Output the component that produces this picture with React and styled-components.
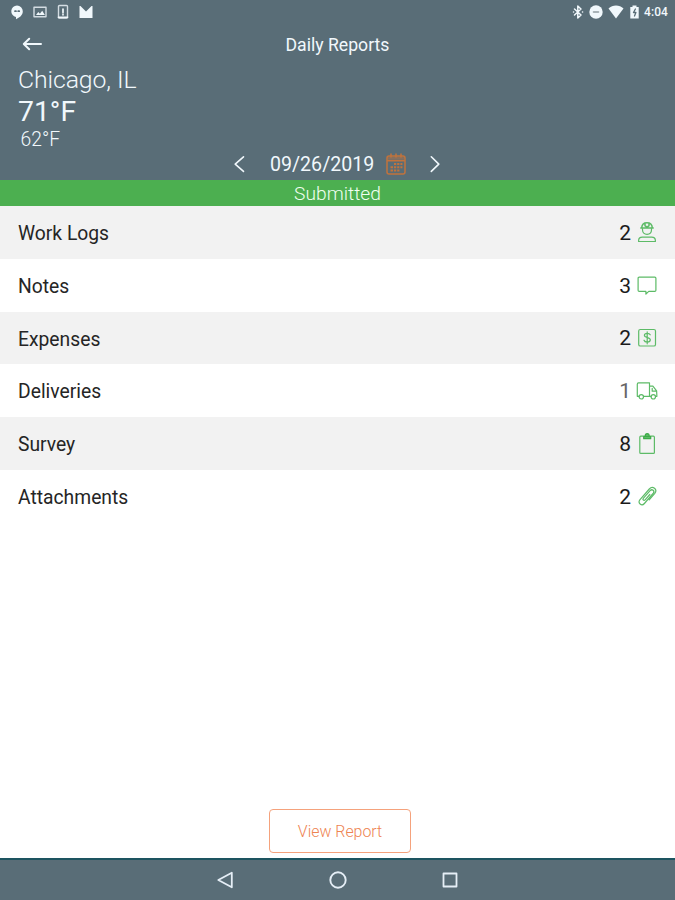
import React from "react";
import styled, { createGlobalStyle } from "styled-components";

const GlobalStyle = createGlobalStyle`
  * { box-sizing: border-box; }
  body { margin: 0; background: #fff; font-family: Roboto, sans-serif; }
`;

const Screen = styled.div`
  display: flex;
  flex-direction: column;
  width: 675px;
  height: 900px;
  background: #fff;
  overflow: hidden;
`;

const Header = styled.header`
  display: flex;
  flex-direction: column;
  height: 180px;
  background: #596d77;
  color: #f1f8fc;
`;

const StatusBar = styled.div`
  display: flex;
  justify-content: space-between;
  height: 23px;
  padding: 0 7px 0 9px;
`;

const StatusGroup = styled.div`
  display: flex;
  align-items: center;
  gap: ${(p) => p.$gap}px;
`;

const Clock = styled.span`
  font-size: 12px;
  line-height: 22px;
  padding-top: 1px;
  font-weight: 500;
  letter-spacing: 0.1px;
`;

const Toolbar = styled.div`
  display: grid;
  grid-template-columns: 60px 1fr 60px;
  align-items: center;
  height: 43px;
`;

const IconButton = styled.button`
  display: flex;
  align-items: center;
  justify-content: center;
  padding: 0;
  border: 0;
  background: none;
  color: inherit;
`;

const BackButton = styled(IconButton)`
  width: 24px;
  height: 24px;
  margin-left: 20px;
  margin-top: -1px;
`;

const Title = styled.h1`
  margin: 0;
  text-align: center;
  font-size: 17.65px;
  line-height: 22px;
  font-weight: 400;
`;

const Weather = styled.div`
  display: flex;
  flex-direction: column;
  height: 84px;
  padding-left: 18px;
`;

const City = styled.div`
  font-size: 24.8px;
  line-height: 28px;
  font-weight: 300;
  letter-spacing: -0.1px;
`;

const High = styled.div`
  padding-top: 1px;
  font-size: 28.3px;
  line-height: 34px;
  font-weight: 400;
`;

const Low = styled.div`
  padding-left: 2.5px;
  font-size: 19.3px;
  line-height: 22px;
  font-weight: 300;
`;

const DateRow = styled.div`
  display: flex;
  align-items: center;
  justify-content: center;
  height: 28px;
`;

const DateText = styled.span`
  margin-left: 21px;
  width: 116px;
  padding-top: 2px;
  font-size: 19.6px;
  line-height: 28px;
`;

const NextButton = styled(IconButton)`
  margin-left: 20px;
`;

const Banner = styled.div`
  height: 26px;
  background: #4caf50;
  color: #f0fff0;
  text-align: center;
  font-size: 19.2px;
  line-height: 28px;
  font-weight: 300;
`;

const List = styled.ul`
  margin: 0;
  padding: 0;
  list-style: none;
`;

const Row = styled.li`
  display: flex;
  align-items: center;
  height: 52.75px;
  padding: 1px 16px 0 18px;
  color: #252525;
  font-size: 19.3px;
  background: #fff;
  &:nth-child(odd) { background: #f2f2f2; }
`;

const Label = styled.span`
  flex: 1;
  padding-top: 1.5px;
`;

const Count = styled.span`
  font-size: 21px;
  margin-right: 4px;
  color: ${(p) => (p.$muted ? "#666" : "#1b1b1b")};
`;

const Footer = styled.div`
  display: flex;
  flex: 1;
  align-items: flex-end;
  justify-content: center;
  padding: 0 0 5px 5px;
`;

const ReportButton = styled.button`
  width: 142px;
  height: 44px;
  padding: 1px 0 0;
  border: 1px solid #f5a27c;
  border-radius: 4px;
  background: #fff;
  color: #ee8452;
  font: 300 15.9px/41px Roboto, sans-serif;
`;

const NavBar = styled.nav`
  display: grid;
  grid-template-columns: repeat(3, 112.5px);
  justify-content: center;
  align-items: center;
  height: 42px;
  border-top: 2px solid #1d5460;
  background: #596d77;
  color: #e5eef6;
`;

const NavButton = styled(IconButton)`
  height: 40px;
  padding-bottom: 1px;
`;

const Svg = ({ w = 24, h = w, box = `0 0 ${w} ${h}`, sw = 1.2, children }) => (
  <svg width={w} height={h} viewBox={box} fill="none" stroke="currentColor"
    strokeWidth={sw} strokeLinecap="round" strokeLinejoin="round">{children}</svg>
);

const RowIcon = styled.span`
  display: flex;
  margin-top: -2px;
  color: #5dbb67;
`;

const CalendarIcon = () => (
  <svg width="20" height="22" viewBox="0 0 20 22" fill="none" stroke="#c1733d" strokeWidth="1.5">
    <rect x="1" y="3" width="18" height="18" rx="2" />
    <path d="M1 7.7h18M5 .5v4M10 .5v4M15 .5v4" />
    <path d="M1.5 5.3h17" strokeWidth="3" opacity=".45" />
    <path d="M8 11h2.2M11.2 11h2.2M14.4 11h2M4.5 14.3H7M8 14.3h2.2M11.2 14.3h2.2M14.4 14.3h2M4.5 17.6H7M8 17.6h2.2M11.2 17.6h2.2" strokeWidth="2" />
  </svg>
);

const WorkerIcon = () => (
  <Svg>
    <path d="M6.7 7.7C6.9 4.500 9 2.700 12 2.700s5.100 1.800 5.300 5M5.800 8h12.400M10 3.200v2.600l2 1.200 2-1.200V3.200" strokeWidth="1.500" />
    <path d="M7.500 8.500v1.300c0 2.600 1.900 4.500 4.500 4.500s4.500-1.900 4.500-4.500V8.500" />
    <path d="M3.600 21.500v-.8c0-2.300 1.500-3.500 3.700-3.500h9.400c2.200 0 3.700 1.200 3.700 3.500v.8Z" />
  </Svg>
);
const NoteIcon = () => (
  <Svg><path d="M4.200 4.200h15.600c.7 0 1.100.4 1.100 1.100v12c0 .7-.4 1.100-1.100 1.100h-6L10.900 21v-2.600H4.200c-.7 0-1.100-.4-1.100-1.100v-12c0-.7.4-1.100 1.100-1.100Z" /></Svg>
);
const ExpenseIcon = () => (
  <Svg>
    <rect x="3.700" y="4.500" width="16.800" height="16.500" rx="1.600" />
    <path d="M15.200 9.800c-.5-1-1.500-1.500-2.900-1.500-1.700 0-2.900.7-2.900 2 0 3 5.900 1.600 5.900 4.500 0 1.500-1.300 2.300-3.100 2.300-1.600 0-2.800-.7-3.200-1.900M12.200 6.800v12" />
  </Svg>
);
const TruckIcon = () => (
  <Svg>
    <path d="M4.100 18.300H2.300V6.200c0-.9.400-1.300 1.200-1.300h11v13.400H8.500M14.500 8.100h3.400l3.700 4.800.3 5.400h-1.300M16 18.300h-1.500M17.200 10.300v2.900h4.200" />
    <circle cx="6.300" cy="18.800" r="2.200" /><circle cx="18.300" cy="18.800" r="2.200" />
  </Svg>
);
const ClipboardIcon = () => (
  <Svg>
    <rect x="4.800" y="5.200" width="14.600" height="17.200" rx="1" />
    <path d="M8.700 5.500h7v2.200h-7ZM10.200 5.300c0-1.700.6-2.700 2-2.700s2 1 2 2.700" fill="currentColor" stroke="#3eab48" />
  </Svg>
);
const ClipIcon = () => (
  <Svg>
    <path d="m14.800 10.500-4.700 5.300c-1.200 1.300-2.900-.1-1.800-1.500l6.800-7.600c2-2.200 5 .2 3.200 2.500l-8.900 10.300c-2.700 3-7.200-.4-4.600-3.700L14.300 5c3.400-3.800 8.600.4 5.500 4.400l-5.600 6.500" />
  </Svg>
);

const rows = [
  ["Work Logs", 2, WorkerIcon],
  ["Notes", 3, NoteIcon],
  ["Expenses", 2, ExpenseIcon],
  ["Deliveries", 1, TruckIcon],
  ["Survey", 8, ClipboardIcon],
  ["Attachments", 2, ClipIcon],
];

export default function App() {
  return (
    <>
      <GlobalStyle />
      <Screen>
        <Header>
          <StatusBar>
            <StatusGroup $gap={7}>
              <Svg w={16}>
                <path d="M8 1.500a5.800 5.800 0 0 0-1 11.500v2.200c3.500-1.400 6.800-4 6.800-7.900A5.800 5.800 0 0 0 8 1.500Z" fill="#f1f8fc" stroke="none" />
                <path d="M6 7.200h1M9.200 7.200h1" stroke="#596d77" strokeWidth="1.700" />
              </Svg>
              <Svg w={16}><rect x="2" y="3.200" width="12" height="9.500" strokeWidth="1.400" opacity=".8" /><path d="m4 11 2.300-2.900 1.600 1.600 2.300-2.900 2.700 4.200Z" fill="#f1f8fc" stroke="none" /></Svg>
              <Svg w={16}><rect x="3.500" y="1.500" width="9" height="12.500" rx="1" strokeWidth="1.400" opacity=".8" /><path d="M3.500 13.300h9M8 5v3.600M8 10.400v.4" strokeWidth="1.700" /></Svg>
              <Svg w={16}><path d="M1.500 14v-12h1L8 7.500 13.500 2h1v12Z" fill="#f1f8fc" stroke="none" /></Svg>
            </StatusGroup>
            <StatusGroup $gap={3}>
              <Svg w={14} h={16}><path d="m3.500 5 6.500 6-3.200 3V2l3.200 3-6.500 6M2.500 8h.1M11.500 8h.1" strokeWidth="1.500" /></Svg>
              <Svg w={16}><circle cx="8" cy="8" r="6.700" fill="#f1f8fc" stroke="none" /><path d="M5.700 8h4.600" stroke="#a9b3b8" strokeWidth="2" /></Svg>
              <Svg w={18} h={16}><path d="M1.500 4.500c4-4 11-4 15 0L9 14.500Z" fill="#f1f8fc" stroke="none" /></Svg>
              <Svg w={13} h={16} box="1 0 13 16"><path d="M3.300 3h2.200V1.500h4V3h2.200v11.500H3.300Z" fill="#f1f8fc" stroke="none" /><path d="M8.400 5 6.500 8.500h2.400L7.500 12" stroke="#596d77" strokeWidth="1.300" /></Svg>
              <Clock>4:04</Clock>
            </StatusGroup>
          </StatusBar>
          <Toolbar>
            <BackButton aria-label="Back"><Svg w={24} sw={2}><path d="M21 12H4M9.200 6.800 3.800 12l5.400 5.200" /></Svg></BackButton>
            <Title>Daily Reports</Title>
          </Toolbar>
          <Weather>
            <City>Chicago, IL</City>
            <High>71°F</High>
            <Low>62°F</Low>
          </Weather>
          <DateRow>
            <IconButton aria-label="Previous day"><Svg w={18} sw={1.600}><path d="m12.500 1.800-8.300 7.300 8.300 7.300" /></Svg></IconButton>
            <DateText>09/26/2019</DateText>
            <CalendarIcon />
            <NextButton aria-label="Next day"><Svg w={18} sw={1.600}><path d="m5.300 1.800 7.500 7.300-7.500 7.300" /></Svg></NextButton>
          </DateRow>
        </Header>
        <Banner>Submitted</Banner>
        <List>
          {rows.map(([label, count, Icon]) => (
            <Row key={label}>
              <Label>{label}</Label>
              <Count $muted={count === 1}>{count}</Count>
              <RowIcon><Icon /></RowIcon>
            </Row>
          ))}
        </List>
        <Footer><ReportButton>View Report</ReportButton></Footer>
        <NavBar>
          <NavButton aria-label="Back"><Svg w={20} sw={1.800}><path d="M16.800 2.700v14.600L3.300 10Z" /></Svg></NavButton>
          <NavButton aria-label="Home"><Svg w={20} sw={1.900}><circle cx="10" cy="10" r="7.700" /></Svg></NavButton>
          <NavButton aria-label="Overview"><Svg w={20} sw={1.800}><path d="M3.500 3.500h13v13h-13Z" /></Svg></NavButton>
        </NavBar>
      </Screen>
    </>
  );
}
